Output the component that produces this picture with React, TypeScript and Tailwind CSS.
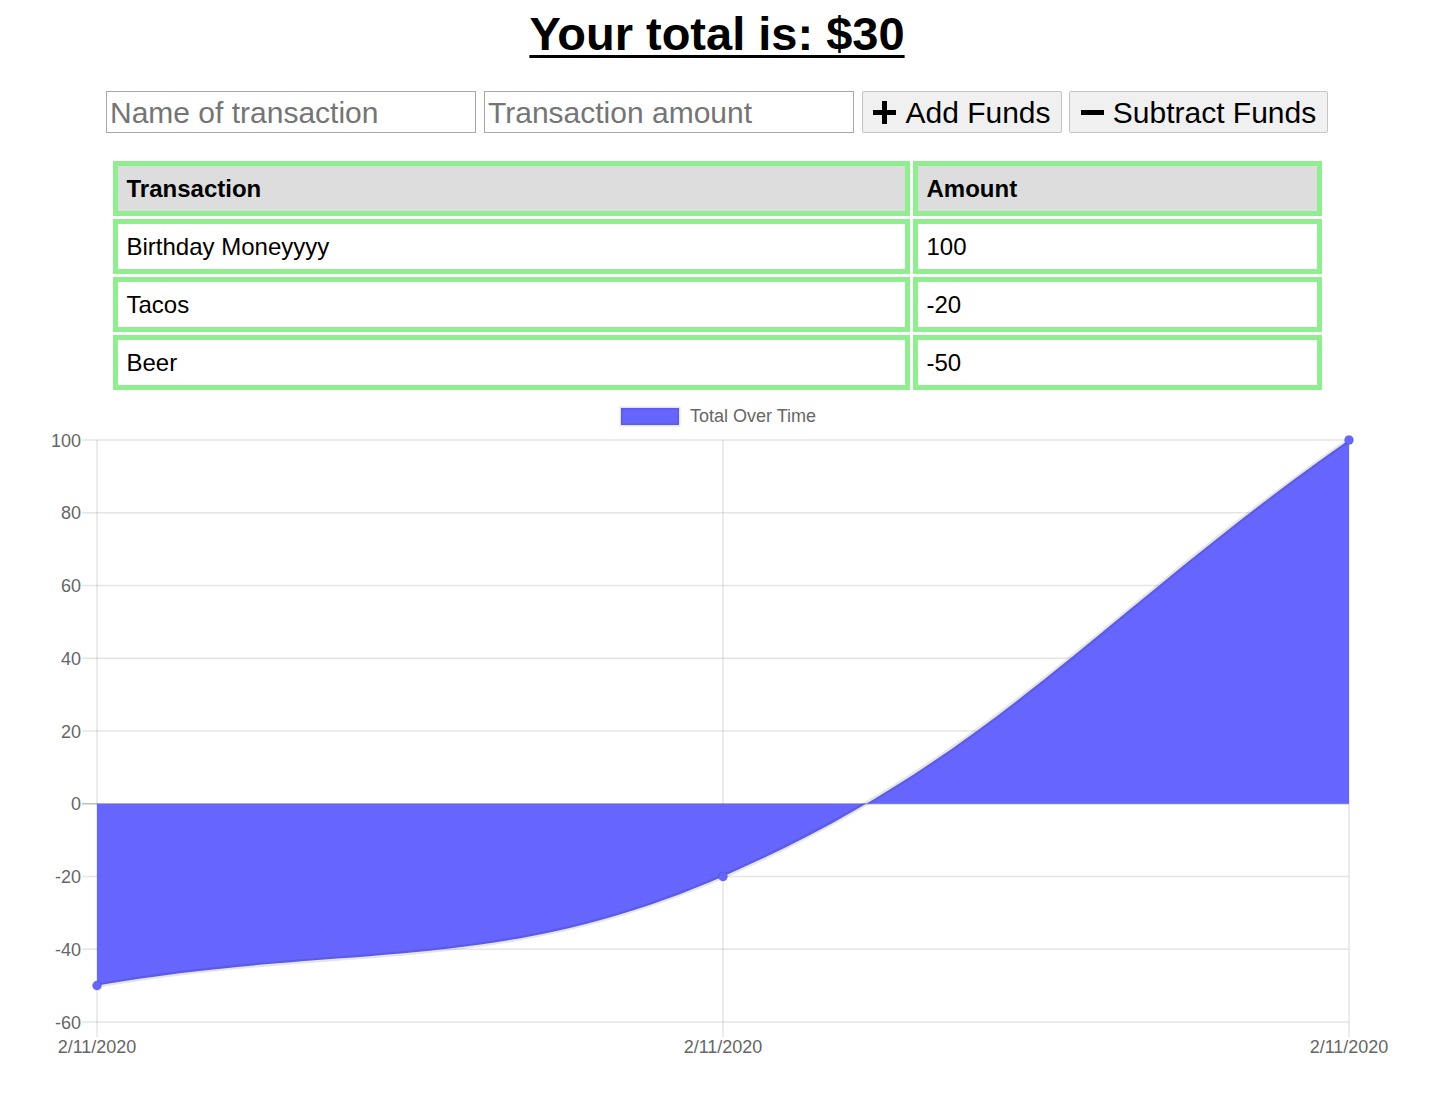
import React from "react";

type Row = { name: string; amount: number };

const rows: Row[] = [
  { name: "Birthday Moneyyyy", amount: 100 },
  { name: "Tacos", amount: -20 },
  { name: "Beer", amount: -50 },
];

// chart geometry (page coordinates, chart starts below the table)
const LEFT = 97;
const RIGHT = 1349;
const TOP = 440;
const BOTTOM = 1022;
const yOf = (v: number) => TOP + ((100 - v) / 160) * (BOTTOM - TOP);
const ticks = [100, 80, 60, 40, 20, 0, -20, -40, -60];
const xs = [LEFT, (LEFT + RIGHT) / 2, RIGHT];

const curve =
  "M97,985.6 C347.4,941.96 495.5,975.6 723,876.5 C996.3,757.4 1098.6,614.6 1349,440";
const zero = yOf(0);
const area = `M97,${zero} L97,985.6 C347.4,941.96 495.5,975.6 723,876.5 C996.3,757.4 1098.6,614.6 1349,440 L1349,${zero} Z`;

function Chart() {
  return (
    <svg
      width={1437}
      height={714}
      viewBox="0 393 1437 714"
      className="block"
      style={{ fontFamily: '"Liberation Sans", Arial, sans-serif' }}
    >
      {/* legend */}
      <rect x={621} y={408} width={58} height={17} fill="#6666ff" stroke="rgba(0,0,0,0.1)" strokeWidth={3} />
      <text x={690} y={422} fontSize={18} fill="#666">
        Total Over Time
      </text>

      {/* horizontal grid */}
      {ticks.map((t) => (
        <g key={t}>
          <line
            x1={82}
            x2={RIGHT}
            y1={yOf(t)}
            y2={yOf(t)}
            stroke={t === 0 ? "rgba(0,0,0,0.25)" : "rgba(0,0,0,0.1)"}
            strokeWidth={1.5}
          />
          <text x={81} y={yOf(t) + 6.5} fontSize={18} fill="#666" textAnchor="end">
            {t}
          </text>
        </g>
      ))}

      {/* vertical grid */}
      {xs.map((x) => (
        <g key={x}>
          <line x1={x} x2={x} y1={TOP} y2={BOTTOM + 15} stroke="rgba(0,0,0,0.1)" strokeWidth={1.5} />
          <text x={x} y={1053} fontSize={18} fill="#666" textAnchor="middle">
            2/11/2020
          </text>
        </g>
      ))}

      <path d={area} fill="#6666ff" />
      <path d={curve} fill="none" stroke="rgba(0,0,0,0.1)" strokeWidth={4.5} />
      {[
        [97, 985.6],
        [723, 876.5],
        [1349, 440],
      ].map(([x, y]) => (
        <circle key={x} cx={x} cy={y} r={4.5} fill="#6666ff" stroke="rgba(0,0,0,0.1)" strokeWidth={1.5} />
      ))}
    </svg>
  );
}

function PlusIcon() {
  return (
    <svg width="23" height="23" viewBox="0 0 23 23" className="shrink-0">
      <path d="M9 0h5v9h9v5h-9v9H9v-9H0V9h9z" fill="#000" />
    </svg>
  );
}

function MinusIcon() {
  return (
    <svg width="23" height="23" viewBox="0 0 23 23" className="shrink-0">
      <path d="M0 9h23v5H0z" fill="#000" />
    </svg>
  );
}

export default function App() {
  return (
    <div
      className="w-[1437px] min-h-[1107px] bg-white text-black"
      style={{ fontFamily: '"Liberation Sans", Arial, sans-serif' }}
    >
      <div className="w-[1434px]">
        <h1 className="mt-[6px] h-[55px] text-center text-[47px] font-bold leading-[55px] underline decoration-[3px] underline-offset-[5px]">
          Your total is: $30
        </h1>

        <div className="mt-[30px] flex h-[42px] items-stretch justify-center">
          <input
            type="text"
            placeholder="Name of transaction"
            className="w-[370px] border border-[#a9a9a9] px-[3px] text-[30px] text-black outline-none placeholder:text-[#757575]"
          />
          <input
            type="number"
            placeholder="Transaction amount"
            className="ml-[8px] w-[370px] border border-[#a9a9a9] px-[3px] text-[30px] text-black outline-none placeholder:text-[#757575]"
          />
          <button className="ml-[8px] flex w-[200px] items-center justify-center gap-[9px] rounded-[2px] border border-[#c4c4c4] bg-[#f0f0f0] text-[30px] text-black">
            <PlusIcon />
            Add Funds
          </button>
          <button className="ml-[7px] flex w-[259px] items-center justify-center gap-[9px] rounded-[2px] border border-[#c4c4c4] bg-[#f0f0f0] text-[30px] text-black">
            <MinusIcon />
            Subtract Funds
          </button>
        </div>

        <table className="mx-auto mt-[25px] w-[1215px] border-separate border-spacing-[3px] text-[24px]">
          <thead>
            <tr>
              <th className="h-[55px] w-[797px] border-[5px] border-[#90ee90] bg-[#dddddd] px-[9px] text-left align-middle font-bold">
                Transaction
              </th>
              <th className="h-[55px] border-[5px] border-[#90ee90] bg-[#dddddd] px-[9px] text-left align-middle font-bold">
                Amount
              </th>
            </tr>
          </thead>
          <tbody>
            {rows.map((r) => (
              <tr key={r.name}>
                <td className="h-[55px] border-[5px] border-[#90ee90] px-[9px] align-middle">{r.name}</td>
                <td className="h-[55px] border-[5px] border-[#90ee90] px-[9px] align-middle">{r.amount}</td>
              </tr>
            ))}
          </tbody>
        </table>
      </div>

      <Chart />
    </div>
  );
}
